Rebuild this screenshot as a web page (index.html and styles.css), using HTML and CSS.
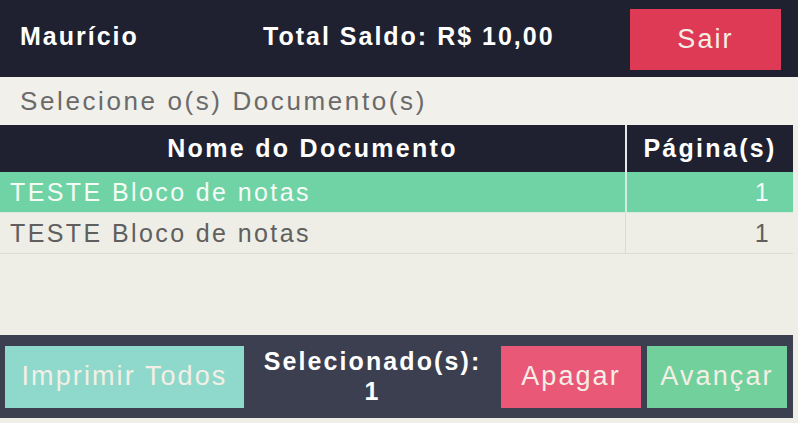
FILE: index.html
```html
<!DOCTYPE html>
<html lang="pt-BR">
<head>
<meta charset="utf-8">
<title>Documentos</title>
<link rel="stylesheet" href="styles.css">
</head>
<body>
<div class="screen">
  <header class="topbar">
    <div class="user">Maurício</div>
    <div class="balance">Total Saldo: R$ 10,00</div>
    <button class="btn btn-exit">Sair</button>
  </header>
  <div class="subtitle">Selecione o(s) Documento(s)</div>
  <div class="table">
    <div class="row head">
      <div class="cell name">Nome do Documento</div>
      <div class="cell pages">Página(s)</div>
    </div>
    <div class="row item selected">
      <div class="cell name">TESTE Bloco de notas</div>
      <div class="cell pages">1</div>
    </div>
    <div class="row item">
      <div class="cell name">TESTE Bloco de notas</div>
      <div class="cell pages">1</div>
    </div>
  </div>
  <div class="spacer"></div>
  <footer class="bottombar">
    <button class="btn btn-print">Imprimir Todos</button>
    <div class="count">Selecionado(s):<br>1</div>
    <button class="btn btn-delete">Apagar</button>
    <button class="btn btn-next">Avançar</button>
  </footer>
</div>
</body>
</html>
```

FILE: styles.css
```css
* { box-sizing: border-box; }
html, body {
  margin: 0;
  padding: 0;
  width: 798px;
  height: 423px;
  overflow: hidden;
  background: #eeede6;
  font-family: "Liberation Sans", Arial, sans-serif;
}
.screen {
  display: flex;
  flex-direction: column;
  height: 423px;
}
.topbar {
  height: 77px;
  background: #1f2130;
  display: flex;
  align-items: center;
  padding: 0 17px 0 20px;
  color: #fff;
  font-weight: bold;
  font-size: 25px;
  letter-spacing: 2px;
}
.user { width: 243px; margin-top: -4px; }
.balance { flex: 1; margin-top: -4px; }
.btn {
  border: none;
  font-family: inherit;
  font-size: 27px;
  letter-spacing: 2.1px;
  padding: 0;
  color: #f4efe6;
}
.btn-exit {
  width: 151px;
  height: 61px;
  background: #df3a55;
  margin-top: 2px;
}
.subtitle {
  height: 48px;
  display: flex;
  align-items: center;
  padding-left: 20px;
  font-size: 26px;
  letter-spacing: 2.6px;
  color: #6a6a6a;
  background: #f1f0eb;
}
.table {
  margin-right: 5px;
}
.row {
  display: flex;
}
.cell {
  display: flex;
  align-items: center;
}
.cell.name { width: 625px; }
.cell.pages { flex: 1; }
.head {
  height: 47px;
  background: #1f2130;
  color: #fff;
  font-weight: bold;
  font-size: 25px;
  letter-spacing: 2.3px;
}
.head .cell { justify-content: center; }
.head .pages { border-left: 2px solid #e6e6e2; }
.item {
  height: 41px;
  font-size: 25px;
  letter-spacing: 2.4px;
  color: #5f5f5f;
  border-bottom: 1px solid #dcdad3;
}
.item .name { padding-left: 10px; }
.item .pages {
  justify-content: flex-end;
  padding-right: 22px;
  border-left: 1px solid #dcdad3;
}
.item.selected {
  background: #6fd3a6;
  color: #f5fbf5;
  border-bottom: 1px solid #d6ebdf;
}
.item.selected .pages { border-left: 2px solid #d6ebdf; }
.spacer { flex: 1; }
.bottombar {
  height: 83px;
  margin-bottom: 5px;
  margin-right: 5px;
  background: #3b3f50;
  display: flex;
  align-items: center;
  padding: 0 6px 0 5px;
}
.btn-print {
  width: 239px;
  height: 62px;
  background: #8ed9cb;
}
.count {
  flex: 1;
  text-align: center;
  color: #fff;
  font-weight: bold;
  font-size: 25px;
  letter-spacing: 2.1px;
  line-height: 30px;
  margin-top: -2px;
}
.btn-delete {
  width: 140px;
  height: 62px;
  background: #ea5877;
  margin-right: 6px;
}
.btn-next {
  width: 140px;
  height: 62px;
  background: #72d09c;
}
```
